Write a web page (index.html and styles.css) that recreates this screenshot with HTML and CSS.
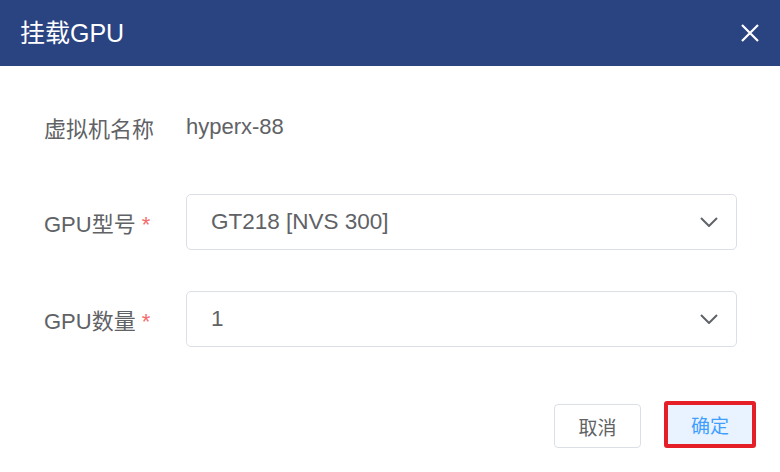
FILE: index.html
```html
<!DOCTYPE html>
<html lang="zh-CN">
<head>
<meta charset="utf-8">
<title>挂载GPU</title>
<link rel="stylesheet" href="styles.css">
</head>
<body>
<div class="dialog">
  <div class="header">
    <span class="title">挂载GPU</span>
    <button class="close" aria-label="关闭">
      <svg width="20" height="20" viewBox="0 0 20 20"><path d="M2 2 L18 18 M18 2 L2 18" stroke="#fff" stroke-width="2.2" stroke-linecap="butt" fill="none"/></svg>
    </button>
  </div>
  <div class="body">
    <div class="row row-first">
      <div class="label">虚拟机名称</div>
      <div class="value">hyperx-88</div>
    </div>
    <div class="row row-second">
      <div class="label">GPU型号 <span class="req">*</span></div>
      <div class="select">
        <span class="select-text">GT218 [NVS 300]</span>
        <svg class="chev" width="18" height="10" viewBox="0 0 18 10"><path d="M1 1 L9 9 L17 1" stroke="#5f6368" stroke-width="2" fill="none"/></svg>
      </div>
    </div>
    <div class="row row-third">
      <div class="label">GPU数量 <span class="req">*</span></div>
      <div class="select">
        <span class="select-text">1</span>
        <svg class="chev" width="18" height="10" viewBox="0 0 18 10"><path d="M1 1 L9 9 L17 1" stroke="#5f6368" stroke-width="2" fill="none"/></svg>
      </div>
    </div>
  </div>
  <div class="footer">
    <button class="btn btn-cancel">取消</button>
    <button class="btn btn-ok">确定</button>
  </div>
</div>
</body>
</html>
```
FILE: styles.css
```css
* { box-sizing: border-box; }
html, body { margin: 0; padding: 0; background: #fff; }
body {
  width: 780px;
  height: 472px;
  overflow: hidden;
  font-family: "Liberation Sans", "Noto Sans CJK SC", sans-serif;
}
.dialog { width: 780px; height: 472px; display: flex; flex-direction: column; }
.header {
  height: 66px;
  background: #2a4482;
  display: flex;
  align-items: center;
  justify-content: space-between;
  padding: 0 20px 0 20px;
}
.title { color: #fff; font-size: 25px; line-height: 1; padding-top: 1px; }
.close {
  background: none; border: 0; padding: 0; margin: 0;
  width: 20px; height: 20px; display: flex; cursor: pointer;
}
.body { padding: 33px 43px 0 44px; display: flex; flex-direction: column; }
.row { display: grid; grid-template-columns: 142px 1fr; align-items: center; height: 56px; }
.row-second { margin-top: 39px; }
.row-third { margin-top: 41px; }
.label { font-size: 22px; color: #606266; white-space: nowrap; }
.req { color: #f56c6c; }
.value { font-size: 22px; color: #606266; }
.select {
  height: 56px;
  border: 1px solid #dcdfe6;
  border-radius: 5px;
  display: flex;
  align-items: center;
  justify-content: space-between;
  padding: 0 18px 0 24px;
}
.select-text { font-size: 22.5px; color: #606266; }
.chev { display: block; }
.footer {
  display: flex;
  justify-content: flex-end;
  align-items: flex-end;
  gap: 23px;
  padding: 0 24px 0 0;
  margin-top: 54px;
}
.btn {
  font-family: "Liberation Sans", "Noto Sans CJK SC", sans-serif;
  font-size: 19px;
  border-radius: 4px;
  padding: 0;
  cursor: pointer;
}
.btn-cancel {
  width: 87px; height: 44px;
  background: #fff; color: #606266;
  border: 1px solid #dcdfe6;
}
.btn-ok {
  width: 92px; height: 47px;
  background: #e8f3ff; color: #409eff;
  border: 4px solid #e41f28;
  border-radius: 3px;
}
```
